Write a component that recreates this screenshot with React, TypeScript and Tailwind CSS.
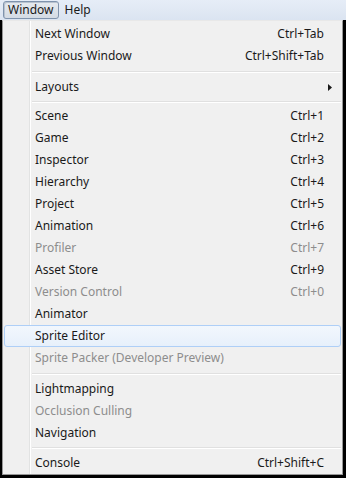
type Item =
  | { sep: true; h: number }
  | { label: string; shortcut?: string; disabled?: boolean; submenu?: boolean; hover?: boolean; sep?: false }

const items: Item[] = [
  { label: 'Next Window', shortcut: 'Ctrl+Tab' },
  { label: 'Previous Window', shortcut: 'Ctrl+Shift+Tab' },
  { sep: true, h: 9 },
  { label: 'Layouts', submenu: true },
  { sep: true, h: 7 },
  { label: 'Scene', shortcut: 'Ctrl+1' },
  { label: 'Game', shortcut: 'Ctrl+2' },
  { label: 'Inspector', shortcut: 'Ctrl+3' },
  { label: 'Hierarchy', shortcut: 'Ctrl+4' },
  { label: 'Project', shortcut: 'Ctrl+5' },
  { label: 'Animation', shortcut: 'Ctrl+6' },
  { label: 'Profiler', shortcut: 'Ctrl+7', disabled: true },
  { label: 'Asset Store', shortcut: 'Ctrl+9' },
  { label: 'Version Control', shortcut: 'Ctrl+0', disabled: true },
  { label: 'Animator' },
  { label: 'Sprite Editor', hover: true },
  { label: 'Sprite Packer (Developer Preview)', disabled: true },
  { sep: true, h: 9 },
  { label: 'Lightmapping' },
  { label: 'Occlusion Culling', disabled: true },
  { label: 'Navigation' },
  { sep: true, h: 8 },
  { label: 'Console', shortcut: 'Ctrl+Shift+C' },
]

export default function App() {
  return (
    <div className="w-[346px] h-[478px] bg-black flex flex-col text-[12px] text-[#1a1a1a] font-['Noto_Sans','DejaVu_Sans',sans-serif] overflow-hidden">
      {/* Menu bar */}
      <div className="h-[20px] shrink-0 flex items-center gap-[3px] px-[3px] bg-gradient-to-b from-[#e6edf7] to-[#dbe4f1]">
        <div className="h-[18px] px-[4px] flex items-center rounded-[3px] border border-[#7f93ad] bg-gradient-to-b from-[#e6eaef] to-[#d4dbe4] shadow-[inset_1px_1px_0_#b8c2cf]">
          Window
        </div>
        <div className="h-[18px] px-[3px] flex items-center">Help</div>
      </div>

      {/* Dropdown */}
      <div className="flex-1 ml-[2px] mr-[3px] mb-[3px] bg-[#f0f0f0] border border-[#979797] border-t-[#e8e8e8] relative flex flex-col pt-[2px]">
        <div className="absolute left-[26px] top-0 bottom-0 w-[2px] border-l border-[#e2e3e3] border-r border-r-white" />
        {items.map((it, i) =>
          it.sep ? (
            <div key={i} style={{ height: it.h }} className="flex items-center pl-[29px] pr-[1px]">
              <div className="flex-1 border-t border-[#e0e0e0] border-b border-b-white" />
            </div>
          ) : (
            <div
              key={i}
              className={
                'relative h-[22px] shrink-0 flex items-center pl-[30px] pr-[16px] mx-[1px] ' +
                (it.hover ? 'rounded-[3px] border border-[#aecff7] bg-gradient-to-b from-[#f2f7fd] to-[#e7f0fb] ' : 'border border-transparent ') +
                (it.disabled ? 'text-[#8d8d8d]' : '')
              }
            >
              <span className="flex-1">{it.label}</span>
              {it.shortcut && <span>{it.shortcut}</span>}
              {it.submenu && (
                <svg className="absolute right-[8px]" width="4" height="7" viewBox="0 0 4 7">
                  <path d="M0 0 L4 3.5 L0 7 Z" fill="#1a1a1a" />
                </svg>
              )}
            </div>
          )
        )}
      </div>
    </div>
  )
}
